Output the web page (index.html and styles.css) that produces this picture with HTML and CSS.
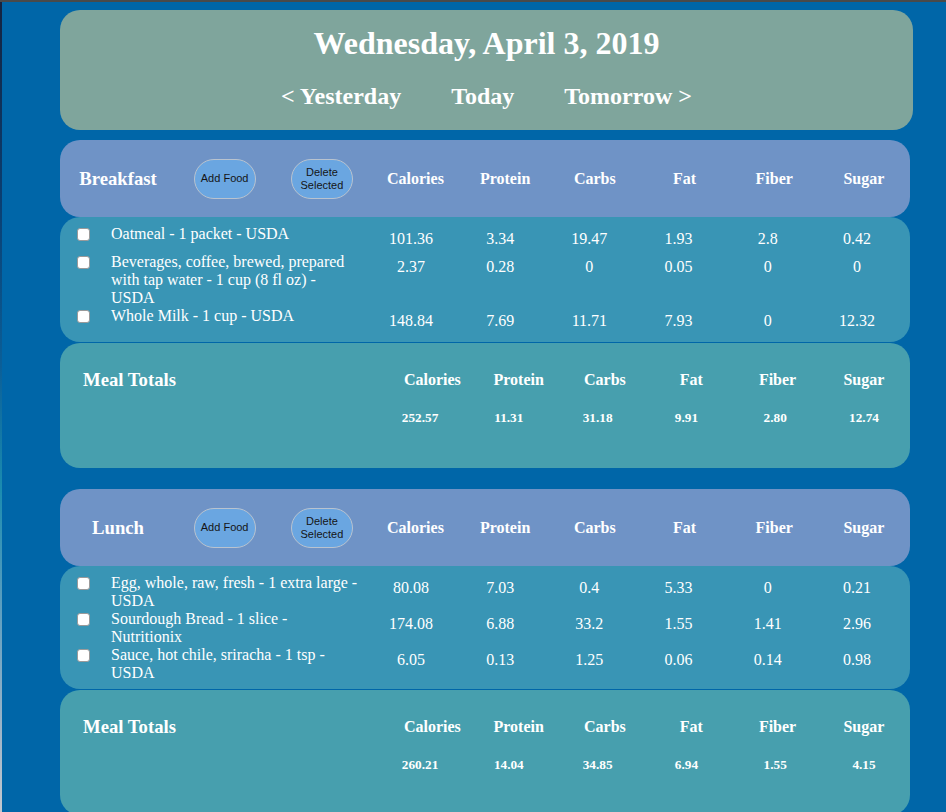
FILE: index.html
```html
<!DOCTYPE html>
<html lang="en">
<head>
<meta charset="utf-8">
<title>Food Diary</title>
<link rel="stylesheet" href="styles.css">
</head>
<body>
<div class="page">
  <header class="day-card">
    <h1 class="day-title">Wednesday, April 3, 2019</h1>
    <nav class="day-nav">
      <a class="nav-link" href="#">&lt; Yesterday</a>
      <a class="nav-link" href="#">Today</a>
      <a class="nav-link" href="#">Tomorrow &gt;</a>
    </nav>
  </header>

  <section class="meal">
    <div class="meal-head">
      <h3 class="meal-name">Breakfast</h3>
      <div class="btn-cell"><button class="pill">Add Food</button></div>
      <div class="btn-cell"><button class="pill">Delete Selected</button></div>
      <div class="head-cols">
        <span>Calories</span><span>Protein</span><span>Carbs</span><span>Fat</span><span>Fiber</span><span>Sugar</span>
      </div>
    </div>
    <div class="items">
      <div class="item">
        <div class="check"><input type="checkbox"></div>
        <div class="item-name">Oatmeal - 1 packet - USDA</div>
        <div class="num">101.36</div><div class="num">3.34</div><div class="num">19.47</div><div class="num">1.93</div><div class="num">2.8</div><div class="num">0.42</div>
      </div>
      <div class="item">
        <div class="check"><input type="checkbox"></div>
        <div class="item-name">Beverages, coffee, brewed, prepared with tap water - 1 cup (8 fl oz) - USDA</div>
        <div class="num">2.37</div><div class="num">0.28</div><div class="num">0</div><div class="num">0.05</div><div class="num">0</div><div class="num">0</div>
      </div>
      <div class="item">
        <div class="check"><input type="checkbox"></div>
        <div class="item-name">Whole Milk - 1 cup - USDA</div>
        <div class="num">148.84</div><div class="num">7.69</div><div class="num">11.71</div><div class="num">7.93</div><div class="num">0</div><div class="num">12.32</div>
      </div>
    </div>
    <div class="totals">
      <h3 class="totals-label">Meal Totals</h3>
      <div class="totals-grid">
        <div class="totals-heads">
          <span>Calories</span><span>Protein</span><span>Carbs</span><span>Fat</span><span>Fiber</span><span>Sugar</span>
        </div>
        <div class="totals-vals">
          <span>252.57</span><span>11.31</span><span>31.18</span><span>9.91</span><span>2.80</span><span>12.74</span>
        </div>
      </div>
    </div>
  </section>

  <section class="meal meal-next">
    <div class="meal-head">
      <h3 class="meal-name">Lunch</h3>
      <div class="btn-cell"><button class="pill">Add Food</button></div>
      <div class="btn-cell"><button class="pill">Delete Selected</button></div>
      <div class="head-cols">
        <span>Calories</span><span>Protein</span><span>Carbs</span><span>Fat</span><span>Fiber</span><span>Sugar</span>
      </div>
    </div>
    <div class="items">
      <div class="item">
        <div class="check"><input type="checkbox"></div>
        <div class="item-name">Egg, whole, raw, fresh - 1 extra large - USDA</div>
        <div class="num">80.08</div><div class="num">7.03</div><div class="num">0.4</div><div class="num">5.33</div><div class="num">0</div><div class="num">0.21</div>
      </div>
      <div class="item">
        <div class="check"><input type="checkbox"></div>
        <div class="item-name">Sourdough Bread - 1 slice - Nutritionix</div>
        <div class="num">174.08</div><div class="num">6.88</div><div class="num">33.2</div><div class="num">1.55</div><div class="num">1.41</div><div class="num">2.96</div>
      </div>
      <div class="item">
        <div class="check"><input type="checkbox"></div>
        <div class="item-name">Sauce, hot chile, sriracha - 1 tsp - USDA</div>
        <div class="num">6.05</div><div class="num">0.13</div><div class="num">1.25</div><div class="num">0.06</div><div class="num">0.14</div><div class="num">0.98</div>
      </div>
    </div>
    <div class="totals">
      <h3 class="totals-label">Meal Totals</h3>
      <div class="totals-grid">
        <div class="totals-heads">
          <span>Calories</span><span>Protein</span><span>Carbs</span><span>Fat</span><span>Fiber</span><span>Sugar</span>
        </div>
        <div class="totals-vals">
          <span>260.21</span><span>14.04</span><span>34.85</span><span>6.94</span><span>1.55</span><span>4.15</span>
        </div>
      </div>
    </div>
  </section>
</div>
</body>
</html>
```

FILE: styles.css
```css
html, body {
  margin: 0;
  padding: 0;
}

body {
  background:
    linear-gradient(#4a4a4a, #4a4a4a) left top / 100% 2px no-repeat,
    linear-gradient(to bottom, #15233f 0%, #0a3f72 25%, #0b5f98 45%, #1b8cb0 60%, #5f9fc0 75%, #9fb5c8 90%, #c5c9cf 100%) left top / 2px 100% no-repeat,
    #0066a8;
  color: #fff;
  font-family: "Liberation Serif", "Times New Roman", serif;
  min-height: 812px;
}

.page {
  padding: 10px 0 0 60px;
}

/* Day header */
.day-card {
  width: 853px;
  height: 120px;
  box-sizing: border-box;
  background: #7fa59c;
  border-radius: 20px;
  padding-top: 15px;
  text-align: center;
}

.day-title {
  margin: 0;
  font-size: 32px;
  line-height: 36px;
  font-weight: bold;
}

.day-nav {
  margin-top: 21px;
  display: flex;
  justify-content: center;
  gap: 50px;
}

.nav-link {
  color: #fff;
  text-decoration: none;
  font-size: 24px;
  line-height: 28px;
  font-weight: bold;
}

/* Meal sections */
.meal {
  width: 850px;
  margin-top: 10px;
}

.meal-next {
  margin-top: 21px;
}

.meal-head {
  height: 77px;
  background: #6f93c6;
  border-radius: 20px;
  display: flex;
  align-items: center;
}

.meal-name {
  margin: 0;
  width: 116px;
  text-align: center;
  font-size: 18.72px;
  line-height: 22px;
  font-weight: bold;
}

.btn-cell {
  width: 97.3px;
  display: flex;
  justify-content: center;
}

.pill {
  width: 62px;
  height: 40px;
  padding: 0 6px;
  box-sizing: border-box;
  border-radius: 20px;
  border: 1px solid #b9c3cf;
  background: #6aa6e1;
  color: #151515;
  font-family: "Liberation Sans", Arial, sans-serif;
  font-size: 11px;
  line-height: 13px;
}

.head-cols {
  display: flex;
}

.head-cols span {
  width: 89.7px;
  text-align: center;
  font-size: 16px;
  font-weight: bold;
  line-height: 20px;
}

/* Item rows */
.items {
  background: #3995b5;
  border-radius: 20px;
  padding: 8px 0 7px 0;
}

.item {
  display: flex;
  align-items: flex-start;
  font-size: 16px;
  line-height: 18px;
}

.check {
  width: 51px;
  box-sizing: border-box;
  padding: 3px 0 0 17px;
  display: flex;
}

.check input {
  appearance: none;
  -webkit-appearance: none;
  margin: 0;
  width: 13px;
  height: 13px;
  box-sizing: border-box;
  background: #fff;
  border: 1px solid #9a9a9a;
  border-radius: 3px;
}

.item-name {
  width: 248px;
  margin-right: 7.4px;
}

.num {
  width: 89.2px;
  text-align: center;
  padding: 5px 0;
}

/* Totals */
.totals {
  height: 125px;
  box-sizing: border-box;
  background: #479fae;
  border-radius: 20px;
  margin-top: 1px;
  padding: 26px 0 0 23px;
  display: flex;
}

.totals-label {
  margin: 0;
  flex: 1;
  font-size: 18.72px;
  line-height: 22px;
  font-weight: bold;
}

.totals-grid {
  display: flex;
  flex-direction: column;
  align-items: flex-end;
}

.totals-heads {
  display: flex;
  margin-right: 3px;
}

.totals-heads span {
  width: 86.3px;
  text-align: center;
  font-size: 16px;
  line-height: 22px;
  font-weight: bold;
}

.totals-vals {
  display: flex;
  margin-top: 19px;
  margin-right: 1.6px;
}

.totals-vals span {
  width: 88.8px;
  text-align: center;
  font-size: 13.28px;
  line-height: 16px;
  font-weight: bold;
}
```
